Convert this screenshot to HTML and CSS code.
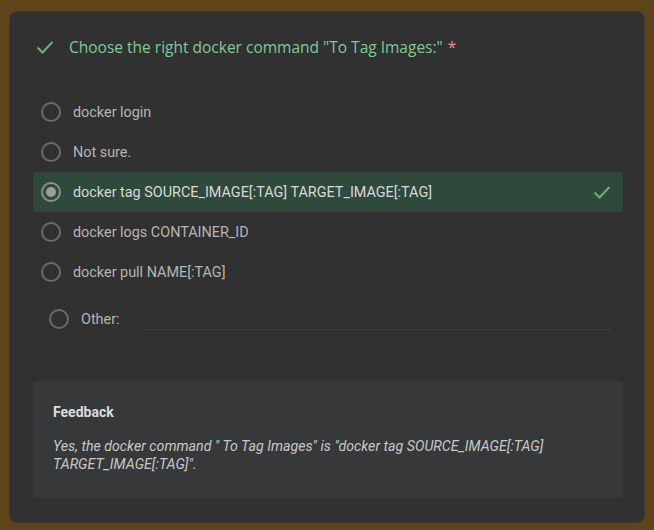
FILE: index.html
```html
<!DOCTYPE html>
<html>
<head>
<meta charset="utf-8">
<link rel="stylesheet" href="styles.css">
</head>
<body>
<div class="card">
  <div class="title">
    <svg class="tick" width="18" height="14" viewBox="0 0 18 14"><path d="M1.5 7.5 L6.5 12.5 L16.5 2" fill="none" stroke="#5bb974" stroke-width="2"/></svg>
    <span class="qtext">Choose the right docker command "To Tag Images:"</span><span class="req">*</span>
  </div>
  <div class="options">
    <div class="opt"><span class="radio"></span><span class="label">docker login</span></div>
    <div class="opt"><span class="radio"></span><span class="label">Not sure.</span></div>
    <div class="opt selected"><span class="radio on"><span class="dot"></span></span><span class="label light">docker tag SOURCE_IMAGE[:TAG] TARGET_IMAGE[:TAG]</span>
      <svg class="okmark" width="18" height="14" viewBox="0 0 18 14"><path d="M1.5 7.5 L6.5 12.5 L16.5 2" fill="none" stroke="#5bb974" stroke-width="2"/></svg>
    </div>
    <div class="opt"><span class="radio"></span><span class="label">docker logs CONTAINER_ID</span></div>
    <div class="opt"><span class="radio"></span><span class="label">docker pull NAME[:TAG]</span></div>
    <div class="opt other"><span class="radio"></span><span class="label">Other:</span><span class="line"></span></div>
  </div>
  <div class="feedback">
    <div class="fbhead">Feedback</div>
    <div class="fbtext">Yes, the docker command " To Tag Images" is "docker tag SOURCE_IMAGE[:TAG] TARGET_IMAGE[:TAG]".</div>
  </div>
</div>
</body>
</html>
```
FILE: styles.css
```css
html, body { margin: 0; padding: 0; }
body {
  background: #5d4519;
  width: 654px;
  height: 530px;
  overflow: hidden;
  font-family: Roboto, "Liberation Sans", sans-serif;
}
.card {
  margin: 11px 0 0 9px;
  width: 636px;
  height: 512px;
  box-sizing: border-box;
  background: #313131;
  border: 1px solid #3b3a36;
  border-radius: 8px;
  padding: 23px 0 0 23px;
}
.title {
  display: flex;
  align-items: center;
  height: 24px;
  color: #81c995;
  font-size: 15.5px;
  font-family: "Open Sans", Roboto, sans-serif;
}
.tick { margin: 0 15px 0 3px; }
.req { color: #f28b82; margin-left: 5px; }
.options {
  margin-top: 33px;
  width: 590px;
}
.opt {
  display: flex;
  align-items: center;
  height: 40px;
  padding-left: 8px;
  border-radius: 4px;
  font-size: 14.4px;
  color: #b5b5b5;
}
.opt.selected { background: #2f4a3b; }
.radio {
  width: 20px;
  height: 20px;
  box-sizing: border-box;
  border: 2px solid #6b6b6b;
  border-radius: 50%;
  flex: none;
  display: flex;
  align-items: center;
  justify-content: center;
}
.radio.on { border-color: #8d8f8e; }
.dot { width: 10px; height: 10px; border-radius: 50%; background: #9c9c9c; }
.label { margin-left: 12px; }
.label.light { color: #d8d8d8; }
.okmark { margin-left: auto; margin-right: 12px; }
.opt.other { margin-top: 7px; padding-left: 16px; }
.line {
  flex: 1;
  align-self: flex-end;
  margin: 0 12px 9px 24px;
  border-bottom: 1px dotted #4a4a4a;
}
.feedback {
  margin-top: 42px;
  width: 590px;
  height: 117px;
  box-sizing: border-box;
  background: #37383a;
  border-radius: 4px;
  padding: 22px 20px 0 20px;
}
.fbhead {
  color: #dcdcdc;
  font-weight: bold;
  font-size: 14px;
  line-height: 18px;
}
.fbtext {
  margin-top: 16px;
  color: #c8c8c8;
  font-style: italic;
  font-size: 14.2px;
  line-height: 18px;
  width: 500px;
}
```
